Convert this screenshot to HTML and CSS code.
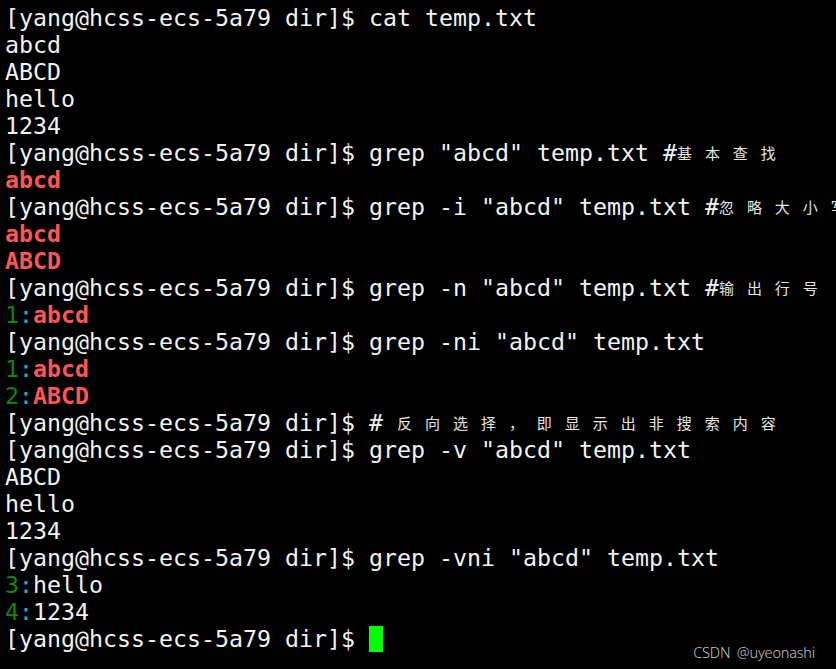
FILE: index.html
```html
<!DOCTYPE html>
<html>
<head>
<meta charset="utf-8">
<link rel="stylesheet" href="styles.css">
</head>
<body>
<div class="term">
<div class="ln">[yang@hcss-ecs-5a79 dir]$ cat temp.txt</div>
<div class="ln">abcd</div>
<div class="ln">ABCD</div>
<div class="ln">hello</div>
<div class="ln">1234</div>
<div class="ln">[yang@hcss-ecs-5a79 dir]$ grep "abcd" temp.txt #<span class="cj">基</span><span class="cj">本</span><span class="cj">查</span><span class="cj">找</span></div>
<div class="ln"><span class="hit">abcd</span></div>
<div class="ln">[yang@hcss-ecs-5a79 dir]$ grep -i "abcd" temp.txt #<span class="cj">忽</span><span class="cj">略</span><span class="cj">大</span><span class="cj">小</span><span class="cj">写</span></div>
<div class="ln"><span class="hit">abcd</span></div>
<div class="ln"><span class="hit">ABCD</span></div>
<div class="ln">[yang@hcss-ecs-5a79 dir]$ grep -n "abcd" temp.txt #<span class="cj">输</span><span class="cj">出</span><span class="cj">行</span><span class="cj">号</span></div>
<div class="ln"><span class="num">1</span><span class="sep">:</span><span class="hit">abcd</span></div>
<div class="ln">[yang@hcss-ecs-5a79 dir]$ grep -ni "abcd" temp.txt</div>
<div class="ln"><span class="num">1</span><span class="sep">:</span><span class="hit">abcd</span></div>
<div class="ln"><span class="num">2</span><span class="sep">:</span><span class="hit">ABCD</span></div>
<div class="ln">[yang@hcss-ecs-5a79 dir]$ # <span class="cj">反</span><span class="cj">向</span><span class="cj">选</span><span class="cj">择</span><span class="cj">，</span><span class="cj">即</span><span class="cj">显</span><span class="cj">示</span><span class="cj">出</span><span class="cj">非</span><span class="cj">搜</span><span class="cj">索</span><span class="cj">内</span><span class="cj">容</span></div>
<div class="ln">[yang@hcss-ecs-5a79 dir]$ grep -v "abcd" temp.txt</div>
<div class="ln">ABCD</div>
<div class="ln">hello</div>
<div class="ln">1234</div>
<div class="ln">[yang@hcss-ecs-5a79 dir]$ grep -vni "abcd" temp.txt</div>
<div class="ln"><span class="num">3</span><span class="sep">:</span>hello</div>
<div class="ln"><span class="num">4</span><span class="sep">:</span>1234</div>
<div class="ln">[yang@hcss-ecs-5a79 dir]$ <span class="cursor"></span></div>
</div>
<div class="mark">CSDN @uyeonashi</div>
</body>
</html>
```
FILE: styles.css
```css
html, body {
  margin: 0;
  padding: 0;
  background: #000;
  width: 836px;
  height: 669px;
  overflow: hidden;
}
body {
  position: relative;
}
.term {
  padding: 4px 0 0 5px;
  font-family: "DejaVu Sans Mono", monospace;
  font-size: 23.25px;
  color: #f2f2f2;
}
.ln {
  height: 27px;
  line-height: 27px;
  white-space: pre;
  overflow: hidden;
}
.cj {
  display: inline-block;
  width: 27.99px;
  font-family: "Noto Sans CJK SC", sans-serif;
  font-size: 15px;
  line-height: 27px;
  vertical-align: top;
  color: #e6e6e6;
}
.hit {
  color: #ff5555;
  font-weight: bold;
}
.num {
  color: #108510;
}
.sep {
  color: #19b5c5;
}
.cursor {
  display: inline-block;
  width: 14px;
  height: 26px;
  background: #00ff00;
  vertical-align: -5px;
}
.mark {
  position: absolute;
  right: 21px;
  bottom: 7px;
  font-family: "Noto Sans", sans-serif;
  font-weight: 300;
  font-size: 14.5px;
  letter-spacing: -0.2px;
  word-spacing: 3px;
  color: #c4c4c4;
}
```
